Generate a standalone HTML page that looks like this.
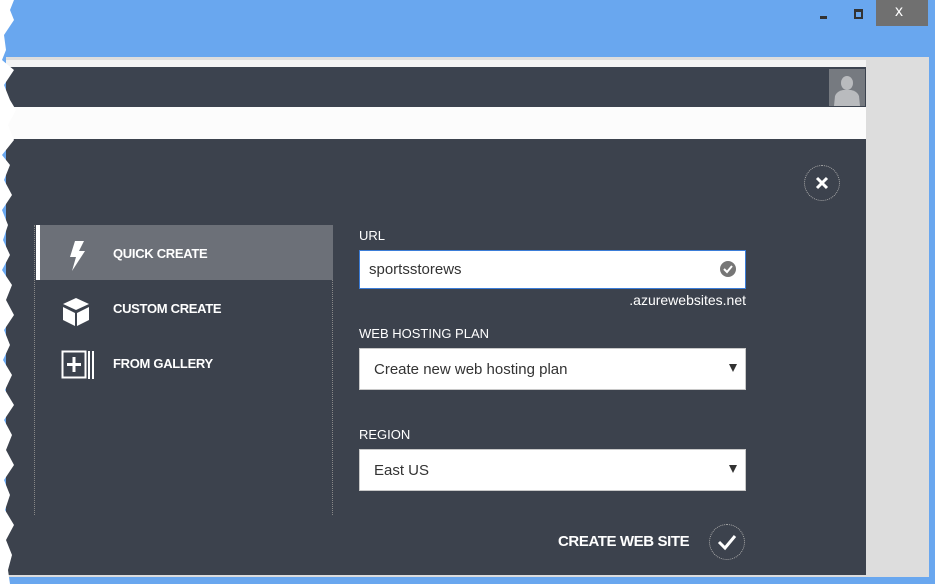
<!DOCTYPE html>
<html><head><style>
*{margin:0;padding:0;box-sizing:border-box}
body{width:935px;height:584px;overflow:hidden;background:#69a7ef;position:relative;font-family:"Liberation Sans",sans-serif}
.a{position:absolute}
.lbl{color:#fff;font-size:13px;position:absolute}
.inp{position:absolute;left:359px;width:387px;background:#fff;border:1px solid #c8c8c8;font-size:15px;color:#333;padding-left:14px}
.tri{position:absolute;right:8px;top:15px;width:0;height:0;border-left:4px solid transparent;border-right:4px solid transparent;border-top:8px solid #333}
.mi{position:absolute;left:113px;color:#fff;font-size:13px;font-weight:bold;letter-spacing:-0.3px}
</style></head><body>
<div class="a" style="left:876px;top:0;width:52px;height:26px;background:#707070"></div>
<div class="a" style="left:895px;top:3px;color:#fff;font-size:16px">x</div>
<div class="a" style="left:820px;top:16px;width:7px;height:3px;background:#333"></div>
<div class="a" style="left:854px;top:9px;width:9px;height:10px;border:2px solid #333;border-top-width:3px"></div>
<div class="a" style="left:6px;top:57px;width:923px;height:520px;background:#ddd"></div>
<div class="a" style="left:6px;top:60px;width:860px;height:7px;background:#f4f4f4"></div>
<div class="a" style="left:6px;top:67px;width:860px;height:40px;background:#3c434f"></div>
<div class="a" style="left:829px;top:69px;width:36px;height:37px;background:#767a80"></div>
<svg class="a" style="left:829px;top:69px" width="36" height="37"><ellipse cx="18" cy="14" rx="6" ry="7" fill="#b9bbbe"/><path d="M5 37 L6 27 Q8 22 14 21 L22 21 Q28 22 30 27 L31 37Z" fill="#b9bbbe"/></svg>
<div class="a" style="left:6px;top:107px;width:860px;height:32px;background:#fcfcfc"></div>
<div class="a" style="left:6px;top:139px;width:860px;height:436px;background:#3c424d"></div>
<svg class="a" style="left:0;top:0" width="24" height="584"><path d="M0 0 L14 0 L10 10 L14 20 L4 35 L6 50 L2 60 L14 70 L4 85 L10 100 L16 110 L8 125 L14 140 L2 155 L10 165 L4 180 L12 195 L2 210 L8 225 L3 240 L10 255 L2 270 L12 285 L6 300 L14 315 L4 330 L10 345 L3 360 L12 375 L5 390 L14 405 L4 420 L12 435 L6 450 L14 465 L4 480 L10 495 L5 510 L14 525 L6 540 L12 555 L8 570 L10 584 L0 584Z" fill="#fff"/></svg>
<div class="a" style="left:34px;top:225px;width:1px;height:290px;border-left:1px dotted #888"></div>
<div class="a" style="left:332px;top:225px;width:1px;height:290px;border-left:1px dotted #888"></div>
<div class="a" style="left:36px;top:225px;width:297px;height:55px;background:#6c7078"></div>
<div class="a" style="left:36px;top:225px;width:4px;height:55px;background:#fff"></div>
<svg class="a" style="left:66px;top:240px" width="22" height="32"><path d="M9 1 L18 1 L13 11 L19 11 L6 31 L10 17 L4 17Z" fill="#fff"/></svg>
<div class="mi" style="top:246px">QUICK CREATE</div>
<svg class="a" style="left:61px;top:296px" width="30" height="32"><path d="M2 8 L15 2 L28 8 L15 14Z" fill="#fff"/><path d="M2 11 L14 17 L14 30 L2 24Z" fill="#fff"/><path d="M16 17 L28 11 L28 24 L16 30Z" fill="#fff"/></svg>
<div class="mi" style="top:301px">CUSTOM CREATE</div>
<svg class="a" style="left:61px;top:350px" width="34" height="30"><rect x="1.5" y="1.5" width="23" height="26" fill="none" stroke="#fff" stroke-width="2"/><path d="M13 7 V22 M6 14.5 H20" stroke="#fff" stroke-width="3"/><path d="M28 1 V29 M32 1 V29" stroke="#fff" stroke-width="2"/></svg>
<div class="mi" style="top:356px">FROM GALLERY</div>
<div class="lbl" style="left:359px;top:228px">URL</div>
<div class="inp" style="top:250px;height:39px;border:1px solid #3b7dd8;line-height:37px;padding-left:9px">sportsstorews</div>
<svg class="a" style="left:719px;top:260px" width="18" height="18"><circle cx="9" cy="9" r="8" fill="#767676"/><path d="M5 9 L8 12 L13 6" stroke="#fff" stroke-width="2" fill="none"/></svg>
<div class="lbl" style="left:560px;width:186px;text-align:right;top:292px;font-size:14px">.azurewebsites.net</div>
<div class="lbl" style="left:359px;top:326px">WEB HOSTING PLAN</div>
<div class="inp" style="top:348px;height:42px;line-height:42px">Create new web hosting plan<div class="tri"></div></div>
<div class="lbl" style="left:359px;top:427px">REGION</div>
<div class="inp" style="top:449px;height:42px;line-height:42px">East US<div class="tri"></div></div>
<div class="a" style="left:558px;top:533px;color:#fff;font-size:15px;font-weight:bold;letter-spacing:-0.4px">CREATE WEB SITE</div>
<div class="a" style="left:709px;top:524px;width:36px;height:36px;border:1px dotted #aaa;border-radius:50%"></div>
<svg class="a" style="left:709px;top:524px" width="36" height="36"><path d="M10 18 L16 24 L26 12" stroke="#fff" stroke-width="3" fill="none"/></svg>
<div class="a" style="left:804px;top:165px;width:36px;height:36px;border:1px dotted #aaa;border-radius:50%"></div>
<svg class="a" style="left:804px;top:165px" width="36" height="36"><path d="M13 13 L23 23 M23 13 L13 23" stroke="#fff" stroke-width="3"/></svg>
</body></html>
